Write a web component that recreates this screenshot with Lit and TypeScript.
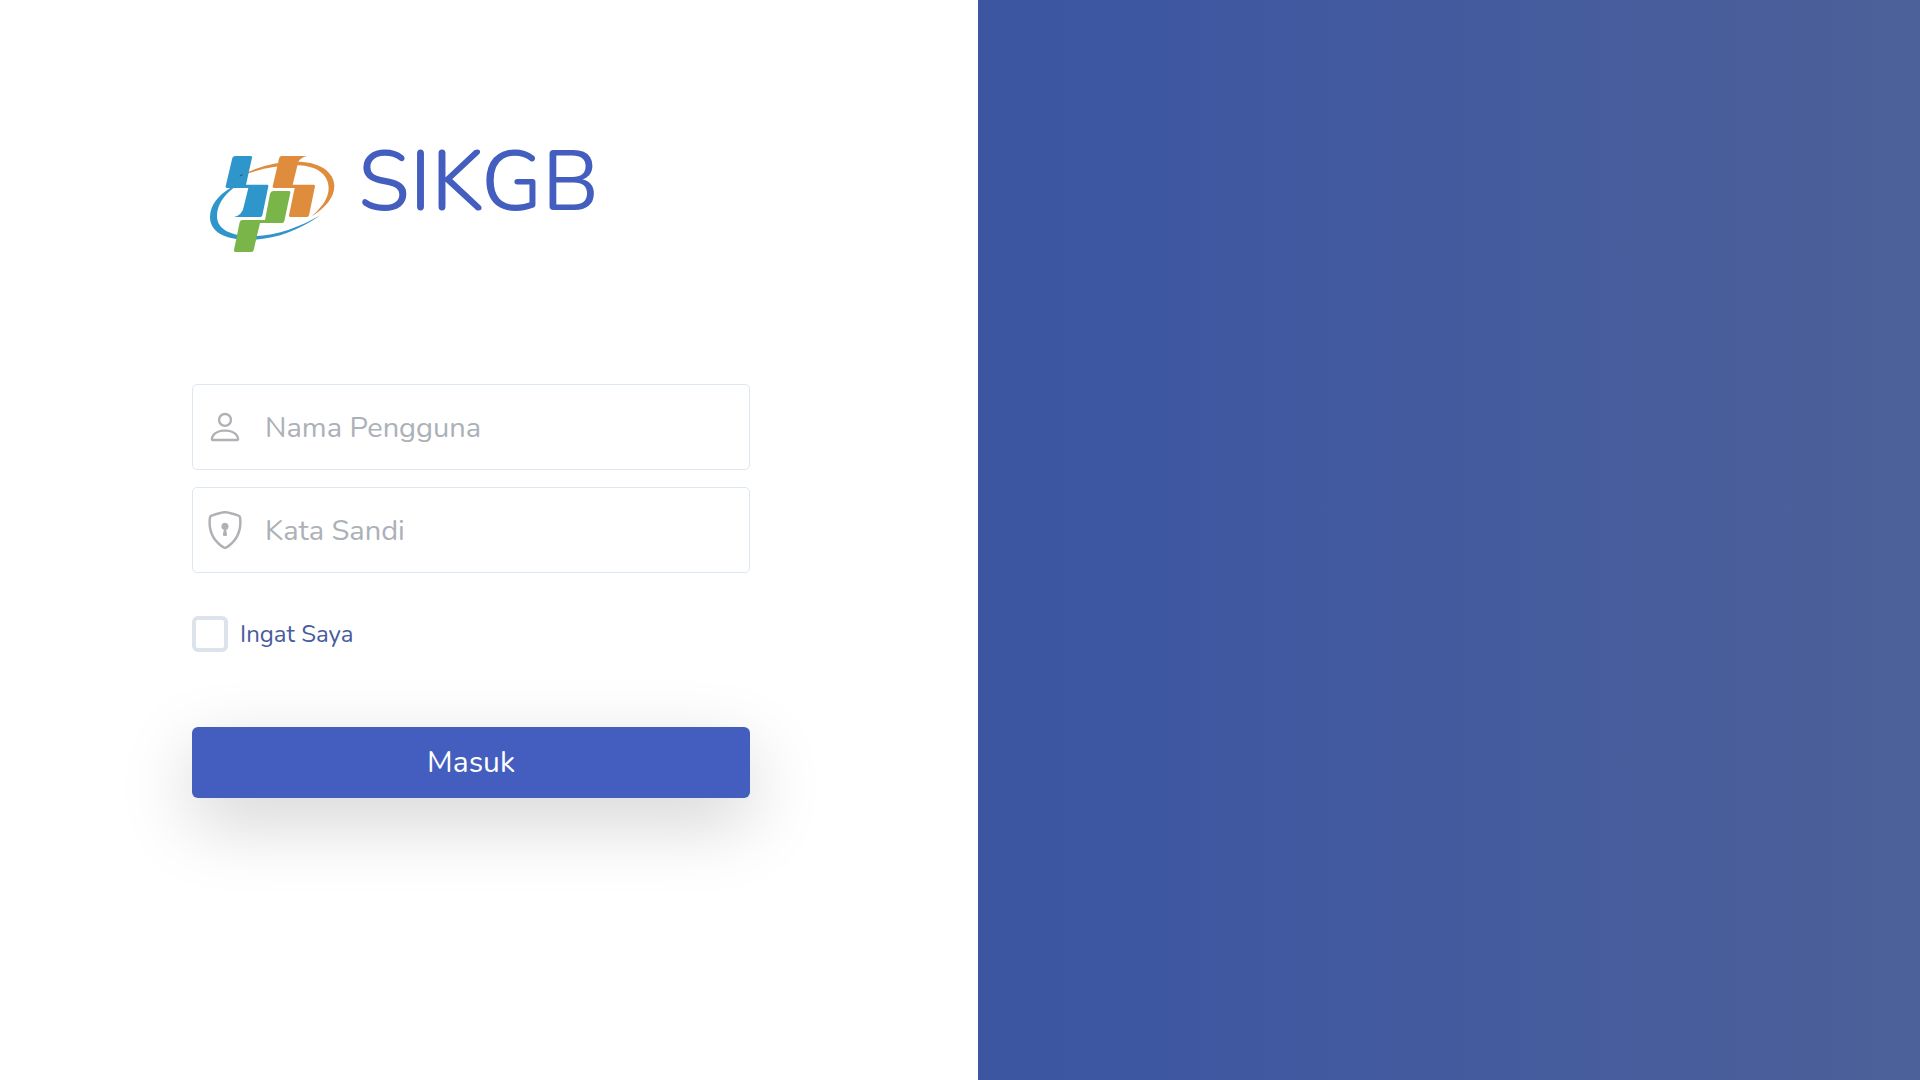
import { LitElement, html, css, svg } from "lit";
import { customElement } from "lit/decorators.js";

const personIcon = svg`<path d="M8 8a3 3 0 1 0 0-6 3 3 0 0 0 0 6zm2-3a2 2 0 1 1-4 0 2 2 0 0 1 4 0zm4 8c0 1-1 1-1 1H3s-1 0-1-1 1-4 6-4 6 3 6 4zm-1-.004c-.001-.246-.154-.986-.832-1.664C11.516 10.68 10.289 10 8 10c-2.29 0-3.516.68-4.168 1.332-.678.678-.83 1.418-.832 1.664h10z"/>`;

const shieldIcon = svg`<path d="M5.338 1.59a61.44 61.44 0 0 0-2.837.856.481.481 0 0 0-.328.39c-.554 4.157.726 7.19 2.253 9.188a10.725 10.725 0 0 0 2.287 2.233c.346.244.652.42.893.533.12.057.218.095.293.118a.55.55 0 0 0 .101.025.615.615 0 0 0 .1-.025c.076-.023.174-.061.294-.118.24-.113.547-.29.893-.533a10.726 10.726 0 0 0 2.287-2.233c1.527-1.997 2.807-5.031 2.253-9.188a.48.48 0 0 0-.328-.39c-.651-.213-1.75-.56-2.837-.855C9.552 1.29 8.531 1.067 8 1.067c-.53 0-1.552.223-2.662.524zM5.072.56C6.157.265 7.31 0 8 0s1.843.265 2.928.56c1.11.3 2.229.655 2.887.87a1.54 1.54 0 0 1 1.044 1.262c.596 4.477-.787 7.795-2.465 9.99a11.775 11.775 0 0 1-2.517 2.453 7.159 7.159 0 0 1-1.048.625c-.28.132-.581.24-.829.24s-.548-.108-.829-.24a7.158 7.158 0 0 1-1.048-.625 11.777 11.777 0 0 1-2.517-2.453C1.928 10.487.545 7.169 1.141 2.692A1.54 1.54 0 0 1 2.185 1.43 62.456 62.456 0 0 1 5.072.56z"/><path d="M9.5 6.5a1.5 1.5 0 0 1-1 1.415l.385 1.99a.5.5 0 0 1-.491.595h-.788a.5.5 0 0 1-.49-.595l.384-1.99a1.5 1.5 0 1 1 2-1.415z"/>`;

@customElement("app-root")
export class AppRoot extends LitElement {
  static styles = css`
    :host {
      display: block;
      font-family: Nunito, Lato, "Open Sans", sans-serif;
    }
    * {
      box-sizing: border-box;
    }
    .page {
      display: grid;
      grid-template-columns: 978fr 942fr;
      min-height: 100vh;
      background: #fff;
    }
    .panel {
      padding: 130px 228px 130px 192px;
    }
    .brand {
      display: flex;
      align-items: flex-start;
      gap: 8px;
      margin-bottom: 114px;
    }
    .logo {
      flex: none;
      width: 158px;
      height: 140px;
    }
    .title {
      margin: 0;
      color: #435ebe;
      font-size: 84px;
      font-weight: 400;
      line-height: 106px;
    }
    .form {
      display: flex;
      flex-direction: column;
    }
    .field {
      display: flex;
      align-items: center;
      height: 86px;
      margin-bottom: 17px;
      padding-left: 13px;
      gap: 21px;
      border: 1px solid #dce7f1;
      border-radius: 5px;
      color: #afb1b5;
    }
    .field:focus-within {
      border-color: #a1afdf;
    }
    .icon {
      flex: none;
      width: 38px;
      height: 38px;
      fill: currentColor;
    }
    .input {
      flex: 1;
      min-width: 0;
      height: 100%;
      padding: 0;
      border: 0;
      outline: 0;
      background: none;
      color: #607080;
      font: inherit;
      font-size: 29px;
    }
    .input::placeholder {
      color: #acb1b8;
      opacity: 1;
    }
    .remember {
      display: flex;
      align-items: center;
      align-self: flex-start;
      gap: 12px;
      margin: 26px 0 75px;
      color: #475c9e;
      font-size: 24px;
      line-height: 36px;
    }
    .check {
      appearance: none;
      width: 36px;
      height: 36px;
      margin: 0;
      border: 4px solid #dce3ea;
      border-radius: 6px;
      background: #fff;
    }
    .check:checked {
      border-color: #435ebe;
      background: #435ebe;
    }
    .submit {
      height: 71px;
      padding: 0;
      border: 0;
      border-radius: 6px;
      background: #435ebe;
      box-shadow: 0 24px 72px rgba(0, 0, 0, 0.175);
      color: #fff;
      font: inherit;
      font-size: 30px;
    }
    .aside {
      background: linear-gradient(90deg, #3c56a2 8%, #4c6099);
    }
  `;

  render() {
    return html`
      <main class="page">
        <section class="panel">
          <header class="brand">
            <svg class="logo" viewBox="6 0 474 420" aria-hidden="true">
              <path fill="#e08c3d" d="M148 139C205 107 265 94 328 95C392 97 433 127 433 169C432 204 407 233 364 260C395 232 416 206 416 173C415 133 380 108 325 106C268 103 211 116 148 139Z"/>
              <path fill="#2f96cb" d="M122 173C85 195 60 226 60 261C60 309 111 333 193 329C263 326 332 298 391 256C331 290 264 317 190 319C122 319 81 298 81 259C81 226 100 197 133 172Z"/>
              <path fill="#2f96cb" d="M136 78H182Q187 78 186 83L168 164H231Q236 164 235 169L217 256Q216 261 211 261H132Q156 255 160 235L175 174H111Q106 174 107 169L127 84Q129 78 136 78Z"/>
              <path fill="#e08c3d" d="M274 78H351Q330 84 325 95L308 164H371Q376 164 375 169L357 256Q356 261 351 261H301Q296 261 297 256L314 174H252Q247 174 248 169L265 96Q267 78 274 78Z"/>
              <path fill="#79b548" d="M250 183H296Q302 183 301 188L283 273Q282 279 276 279H210L191 360Q190 366 184 366H136Q131 366 132 360L149 277Q151 270 157 270H225L240 191Q242 183 250 183Z"/>
              <path d="M149 138L158 134" stroke="#2e5262" stroke-width="3"/>
            </svg>
            <h1 class="title">SIKGB</h1>
          </header>
          <form class="form" @submit=${(e: Event) => e.preventDefault()}>
            <label class="field">
              <svg class="icon" viewBox="0 0 16 16" aria-hidden="true">${personIcon}</svg>
              <input class="input" type="text" placeholder="Nama Pengguna" autocomplete="username" />
            </label>
            <label class="field">
              <svg class="icon" viewBox="0 0 16 16" aria-hidden="true">${shieldIcon}</svg>
              <input class="input" type="password" placeholder="Kata Sandi" autocomplete="current-password" />
            </label>
            <label class="remember">
              <input class="check" type="checkbox" />
              <span>Ingat Saya</span>
            </label>
            <button class="submit" type="submit">Masuk</button>
          </form>
        </section>
        <aside class="aside"></aside>
      </main>
    `;
  }
}
